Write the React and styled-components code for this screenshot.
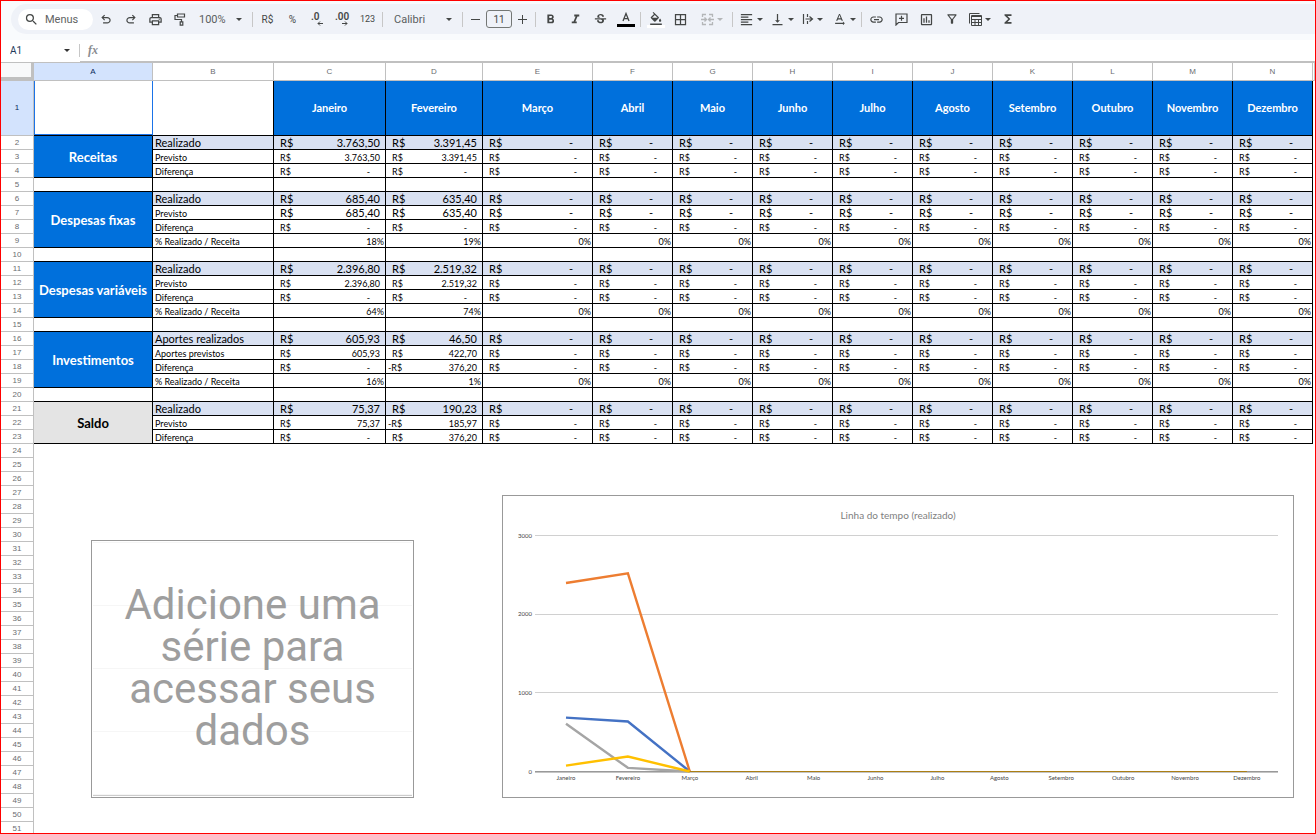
import React from "react";
import styled, { createGlobalStyle, css } from "styled-components";
import {
  MdOutlinePrint,
  MdFormatBold,
  MdFormatItalic,
  MdStrikethroughS,
  MdFormatColorFill,
  MdBorderAll,
  MdFormatAlignLeft,
  MdVerticalAlignBottom,
  MdTextRotationNone,
  MdLink,
  MdOutlineInsertChart,
  MdOutlineFilterAlt,
  MdFunctions,
  MdSearch,
} from "react-icons/md";

const ui = '"Roboto", "Liberation Sans", sans-serif';
const sheetFont = '"Lato", "Open Sans", sans-serif';

const Global = createGlobalStyle`
  *, *::before, *::after { box-sizing: border-box; }
  body { margin: 0; background: #fff; font-family: ${ui}; }
  button, input, select {
    margin: 0; padding: 0; border: 0; background: none; color: inherit; font: inherit;
  }
  button, select { cursor: pointer; }
`;

const Frame = styled.div`
  display: flex;
  flex-direction: column;
  height: 100vh;
  border: 1px solid #f00;
  overflow: hidden;
`;

/* ---------- toolbar ---------- */
const ToolbarArea = styled.header`
  flex: none;
  padding: 3px 0 6px 10px;
  background: #f9fbfd;
`;

const Toolbar = styled.div`
  display: flex;
  align-items: center;
  height: 30px;
  padding-left: 7px;
  border-radius: 15px 0 0 15px;
  background: #eff2f8;
  color: #444746;
  font-size: 11px;
  overflow: hidden;
`;

const MenuSearch = styled.label`
  display: flex;
  align-items: center;
  gap: 6px;
  flex: none;
  width: 75px;
  height: 21px;
  padding-left: 6px;
  border-radius: 11px;
  background: #fff;
  input {
    width: 48px;
    outline: none;
    &::placeholder { color: #5f6363; opacity: 1; }
  }
`;

const Tool = styled.button`
  display: flex;
  flex: none;
  flex-direction: ${(p) => (p.$swatch ? "column" : "row")};
  align-items: center;
  justify-content: center;
  gap: ${(p) => (p.$swatch ? 0 : 3)}px;
  width: ${(p) => p.$w || 25}px;
  height: 30px;
  font-size: ${(p) => p.$size || 10}px;
  color: ${(p) => (p.$muted ? "#b4b6b8" : "#444746")};
  svg { flex: none; }
`;

const Swatch = styled.span`
  width: 18px;
  height: 3px;
  background: ${(p) => p.$color};
`;

const Separator = styled.span`
  flex: none;
  width: 1px;
  height: 15px;
  margin: 0 2px;
  background: #c7c7c7;
`;

const Picker = styled.label`
  display: flex;
  align-items: center;
  flex: none;
  width: ${(p) => p.$w}px;
  padding: 0 8px 0 ${(p) => p.$left}px;
  select {
    flex: 1;
    min-width: 0;
    appearance: none;
    outline: none;
    color: #5a5e5e;
  }
  svg { flex: none; pointer-events: none; }
`;

const SizeInput = styled.input`
  flex: none;
  width: 26px;
  height: 18px;
  && { border: 1px solid #747775; }
  border-radius: 3px;
  text-align: center;
  font-size: 10px;
`;

const Caret = () => (
  <svg width="6" height="3" viewBox="0 0 6 3" aria-hidden="true">
    <path d="M0 0h6L3 3z" fill="currentColor" />
  </svg>
);

const Symbol = ({ d, size = 14 }) => (
  <svg width={size} height={size} viewBox="0 -980 960 960" fill="currentColor" aria-hidden="true">
    <path d={d} />
  </svg>
);

const undoPath =
  "M280-200v-80h284q63 0 109.5-40T720-420q0-60-46.5-100T564-560H312l104 104-56 56-200-200 200-200 56 56-104 104h252q97 0 169.5 63T800-420q0 94-72.5 157T564-200H280Z";
const redoPath =
  "M396-200q-97 0-169.5-63T160-420q0-94 72.5-157T396-640h252L544-744l56-56 200 200-200 200-56-56 104-104H396q-63 0-109.5 40T240-420q0 60 46.5 100T396-280h284v80H396Z";

const Decimals = ({ label, right }) => (
  <svg width="16" height="14" viewBox="0 0 16 14" aria-hidden="true">
    <text x={right ? 0 : 1} y="8" fontSize="10" fontWeight="600" fill="currentColor">{label}</text>
    {right ? (
      <path d="M7 11.5h5M10 9.5l2 2-2 2" fill="none" stroke="currentColor" />
    ) : (
      <path d="M13 11.5H8M10 9.5l-2 2 2 2" fill="none" stroke="currentColor" />
    )}
  </svg>
);

const RollerIcon = () => (
  <svg width="13" height="13" viewBox="0 0 13 13" fill="none" stroke="currentColor" strokeWidth="1.2" aria-hidden="true">
    <path d="M3.500 1h7v3h-7zM3.500 2.500H1v4h6.500V8.500M6.200 8.800h2.600v3.400H6.200z" />
  </svg>
);

const MergeIcon = () => (
  <svg width="13" height="13" viewBox="0 0 13 13" fill="none" stroke="currentColor" strokeWidth="1.3" aria-hidden="true">
    <path d="M5 1.5H1.5V4M8 1.5h3.5V4M5 11.5H1.5V9M8 11.5h3.5V9M0 6.5h5M3.5 4.5l2 2-2 2M13 6.5H8M9.500 4.500l-2 2 2 2" />
  </svg>
);

const OverflowIcon = () => (
  <svg width="12" height="12" viewBox="0 0 12 12" fill="none" stroke="currentColor" aria-hidden="true">
    <path d="M1.500 1v10M5.500 1v3M5.500 8v3M3.500 6H10M7.500 3.500L10.500 6l-3 2.500" strokeWidth="1.2" />
  </svg>
);

const CommentIcon = () => (
  <svg width="13" height="13" viewBox="0 0 13 13" fill="none" stroke="currentColor" strokeWidth="1.2" aria-hidden="true">
    <path d="M1 12V1h11v8.500H3.500zM6.500 2.800v5M4 5.300h5" />
  </svg>
);

const TableViewIcon = () => (
  <svg width="13" height="13" viewBox="0 0 13 13" fill="none" stroke="currentColor" aria-hidden="true">
    <path d="M.5 10.500V.5h10M2.500 12.500v-10h10v10zM2.500 6.500h10M2.500 9.500h10M6 6.500v6M9.500 6.500v6M2.500 3.500h10" />
  </svg>
);

const LetterA = () => (
  <svg width="12" height="12" viewBox="0 0 12 12" aria-hidden="true">
    <path d="M3 9L6 1.500 9 9M4 6.700h4" fill="none" stroke="currentColor" strokeWidth="1.300" />
  </svg>
);

/* ---------- formula bar ---------- */
const FormulaBar = styled.div`
  display: flex;
  flex: none;
  height: 22px;
  color: #333;
  font-size: 10px;
`;

const NameBox = styled.label`
  display: flex;
  align-items: center;
  width: 79px;
  padding: 0 10px 2px 9px;
  input { width: 54px; outline: none; font-size: 10px; color: #1f3a5a; }
`;

const FormulaField = styled.label`
  display: flex;
  align-items: center;
  flex: 1;
  border-bottom: 1px solid #c0c0c0;
  &::before {
    content: "";
    width: 1px;
    height: 13px;
    margin-right: 8px;
    margin-left: -1px;
    background: #c7c7c7;
  }
  em {
    font: italic bold 12px "Liberation Serif", serif;
    color: #8a8d91;
  }
  input { flex: 1; outline: none; padding-left: 12px; }
`;

/* ---------- sheet ---------- */
const SheetArea = styled.main`
  flex: 1;
  min-height: 0;
  border-top: 1px solid #c0c0c0;
  overflow: hidden;
`;

const Sheet = styled.table`
  width: 100%;
  table-layout: fixed;
  border-collapse: separate;
  border-spacing: 0;
  font-family: ${sheetFont};
  color: #000;
  td, th { padding: 0; }
`;

const headLook = css`
  border-right: 1px solid #c0c0c0;
  border-bottom: 1px solid #c0c0c0;
  background: ${(p) => (p.$on ? "#d3e3fd" : "#fff")};
  color: ${(p) => (p.$on ? "#0b2a5c" : "#6a6d70")};
  font: 400 8px/12px "Liberation Sans", Arial, sans-serif;
  text-align: center;
`;

const ColumnHead = styled.th`
  ${headLook}
  height: 18px;
`;

const Corner = styled.th`
  height: 18px;
  border-right: 3px solid #c0c0c0;
  border-bottom: 4px solid #c0c0c0;
  background: #f8f9fa;
`;

const RowHead = styled.th`
  ${headLook}
  height: ${(p) => (p.$on ? 55 : 14)}px;
`;

const Cell = styled.td`
  height: 14px;
  border-right: 1px solid #000;
  border-bottom: 1px solid #000;
  background: ${(p) => (p.$tint ? "#d9e1f2" : "#fff")};
  font-size: ${(p) => (p.$big ? 11 : 9)}px;
  line-height: ${(p) => (p.$big ? 13 : 11)}px;
  vertical-align: bottom;
  white-space: nowrap;
`;

const LabelCell = styled(Cell)`
  && { padding-left: 2px; }
`;

const PercentCell = styled(Cell)`
  && { padding-right: 1px; }
  text-align: right;
`;

const Money = styled.div`
  display: flex;
  justify-content: space-between;
  padding-right: ${(p) => (p.$dash ? (p.$big ? 19 : 15) : 5)}px;
  padding-left: ${(p) => (p.$negative ? 2 : 6)}px;
`;

const MonthCell = styled.th`
  border-right: 1px solid #000;
  border-bottom: 1px solid #000;
  background: #0070dc;
  color: #fff;
  font-size: 11px;
  line-height: 14px;
  font-weight: 700;
`;

const GroupCell = styled.th`
  border-right: 1px solid #000;
  border-bottom: 1px solid #000;
  background: ${(p) => (p.$grey ? "#e4e4e4" : "#0070dc")};
  color: ${(p) => (p.$grey ? "#000" : "#fff")};
  font-size: 13px;
  line-height: 16px;
  font-weight: 700;
  white-space: nowrap;
`;

const SelectedCell = styled.td`
  border-right: 1px solid #1a73e8;
  border-bottom: 1px solid #000;
  box-shadow: inset 1px -1px 0 #1a73e8;
`;

const CanvasCell = styled.td`
  vertical-align: top;
`;

const Charts = styled.div`
  display: flex;
  align-items: flex-end;
  gap: 88px;
  padding: 51px 21px 0 57px;
`;

const EmptyChart = styled.section`
  display: flex;
  align-items: center;
  flex: none;
  width: 323px;
  height: 258px;
  padding: 0 24px 3px;
  border: 1px solid #999;
  background: repeating-linear-gradient(#f6f6f6 0 1px, transparent 1px 63px) 1px 1px / 319px 253px no-repeat,
    linear-gradient(#ccc, #ccc) 1px 254px / 319px 1px no-repeat, #fff;
  p {
    margin: 0;
    width: 100%;
    font: 400 42px/42px ${ui};
    color: #9e9e9e;
    text-align: center;
  }
`;

const LineChart = styled.figure`
  flex: 1;
  min-width: 0;
  height: 303px;
  margin: 0;
  border: 1px solid #999;
  background: #fff;
  svg { display: block; width: 100%; height: 100%; font-family: ${sheetFont}; }
`;

/* ---------- data ---------- */
const months = ["Janeiro", "Fevereiro", "Março", "Abril", "Maio", "Junho", "Julho", "Agosto", "Setembro", "Outubro", "Novembro", "Dezembro"];
const letters = "ABCDEFGHIJKLMN".split("");
const widths = [119, 121, 112, 97, 110, 80, 80, 80, 80, 80, 80, 80, 80, 80];

const groups = [
  {
    name: "Receitas",
    rows: [
      { label: "Realizado", values: ["3.763,50", "3.391,45"], big: true, tint: true },
      { label: "Previsto", values: ["3.763,50", "3.391,45"] },
      { label: "Diferença", values: ["-", "-"] },
    ],
  },
  {
    name: "Despesas fixas",
    rows: [
      { label: "Realizado", values: ["685,40", "635,40"], big: true, tint: true },
      { label: "Previsto", values: ["685,40", "635,40"], bigValues: true },
      { label: "Diferença", values: ["-", "-"] },
      { label: "% Realizado / Receita", values: ["18%", "19%"], percent: true },
    ],
  },
  {
    name: "Despesas variáveis",
    rows: [
      { label: "Realizado", values: ["2.396,80", "2.519,32"], big: true, tint: true },
      { label: "Previsto", values: ["2.396,80", "2.519,32"] },
      { label: "Diferença", values: ["-", "-"] },
      { label: "% Realizado / Receita", values: ["64%", "74%"], percent: true },
    ],
  },
  {
    name: "Investimentos",
    rows: [
      { label: "Aportes realizados", values: ["605,93", "46,50"], big: true, tint: true },
      { label: "Aportes previstos", values: ["605,93", "422,70"] },
      { label: "Diferença", values: ["-", "376,20"], negative: 1 },
      { label: "% Realizado / Receita", values: ["16%", "1%"], percent: true },
    ],
  },
  {
    name: "Saldo",
    grey: true,
    rows: [
      { label: "Realizado", values: ["75,37", "190,23"], big: true, tint: true },
      { label: "Previsto", values: ["75,37", "185,97"], negative: 1 },
      { label: "Diferença", values: ["-", "376,20"] },
    ],
  },
];

const series = [
  { color: "#a5a5a5", values: [605.93, 46.5, 0] },
  { color: "#4472c4", values: [685.4, 635.4, 0] },
  { color: "#ed7d31", values: [2396.8, 2519.32, 0] },
  { color: "#ffc000", values: [75.37, 190.23, 0] },
];

function ValueCell({ row, index }) {
  const big = row.big || row.bigValues;
  const value = row.values[index] ?? (row.percent ? "0%" : "-");
  if (row.percent) return <PercentCell>{value}</PercentCell>;
  const negative = row.negative === index;
  return (
    <Cell $big={big} $tint={row.tint}>
      <Money $big={big} $dash={value === "-"} $negative={negative}>
        <span>{negative ? "-R$" : "R$"}</span>
        <span>{value}</span>
      </Money>
    </Cell>
  );
}

function bodyRows() {
  const out = [];
  let n = 2;
  groups.forEach((group, g) => {
    group.rows.forEach((row, i) => {
      out.push(
        <tr key={n}>
          <RowHead scope="row">{n}</RowHead>
          {i === 0 && (
            <GroupCell rowSpan={group.rows.length} $grey={group.grey}>{group.name}</GroupCell>
          )}
          <LabelCell $big={row.big} $tint={row.tint}>{row.label}</LabelCell>
          {months.map((m, k) => <ValueCell key={m} row={row} index={k} />)}
        </tr>
      );
      n += 1;
    });
    if (g < groups.length - 1) {
      out.push(
        <tr key={n}>
          <RowHead scope="row">{n}</RowHead>
          {letters.map((l) => <Cell key={l} />)}
        </tr>
      );
      n += 1;
    }
  });
  return out;
}

function Timeline() {
  const x = (i) => 63 + i * 61.9;
  const y = (v) => 275.5 - (v * 236) / 3000;
  return (
    <LineChart>
      <svg viewBox="0 0 790 301" role="img" aria-label="Linha do tempo (realizado)">
        <text x="395" y="23" fontSize="10" fill="#808080" textAnchor="middle">Linha do tempo (realizado)</text>
        {[3000, 2000, 1000, 0].map((v) => (
          <g key={v}>
            <path d={`M32 ${Math.floor(y(v)) + 0.5}H775`} stroke={v ? "#d0d0d0" : "#999"} />
            <text x="29" y={y(v) + 2} fontSize="6" fill="#444" textAnchor="end">{v}</text>
          </g>
        ))}
        <path d="M32 276.500H775" stroke="#c4c4c4" />
        {series.map((s) => (
          <polyline
            key={s.color}
            points={s.values.map((v, i) => `${x(i)},${y(v)}`).join(" ")}
            fill="none"
            stroke={s.color}
            strokeWidth="2.4"
          />
        ))}
        <path d={`M${x(2)} 275.500H${x(11)}`} stroke="#ab7f14" />
        {months.map((m, i) => (
          <text key={m} x={x(i)} y="284" fontSize="6" fill="#444" textAnchor="middle">{m}</text>
        ))}
      </svg>
    </LineChart>
  );
}

export default function App() {
  return (
    <Frame>
      <Global />
      <ToolbarArea>
        <Toolbar role="toolbar">
          <MenuSearch>
            <MdSearch size={15} />
            <input placeholder="Menus" aria-label="Menus" />
          </MenuSearch>
          <Tool aria-label="Desfazer"><Symbol d={undoPath} /></Tool>
          <Tool aria-label="Refazer"><Symbol d={redoPath} /></Tool>
          <Tool aria-label="Imprimir"><MdOutlinePrint size={15} /></Tool>
          <Tool aria-label="Pintar formatação"><RollerIcon /></Tool>
          <Picker $w={57} $left={6}>
            <select aria-label="Zoom" defaultValue="100%"><option>100%</option></select>
            <Caret />
          </Picker>
          <Separator />
          <Tool>R$</Tool>
          <Tool>%</Tool>
          <Tool aria-label="Diminuir casas decimais"><Decimals label=".0" /></Tool>
          <Tool aria-label="Aumentar casas decimais"><Decimals label=".00" right /></Tool>
          <Tool $size={9}>123</Tool>
          <Separator />
          <Picker $w={75} $left={9}>
            <select aria-label="Fonte" defaultValue="Calibri"><option>Calibri</option></select>
            <Caret />
          </Picker>
          <Separator />
          <Tool $w={21} aria-label="Diminuir fonte">
            <svg width="9" height="9"><path d="M0 4.500h9" stroke="currentColor" strokeWidth="1" /></svg>
          </Tool>
          <SizeInput defaultValue="11" aria-label="Tamanho da fonte" />
          <Tool $w={21} aria-label="Aumentar fonte">
            <svg width="9" height="9"><path d="M0 4.500h9M4.500 0v9" stroke="currentColor" strokeWidth="1" /></svg>
          </Tool>
          <Separator />
          <Tool aria-label="Negrito"><MdFormatBold size={15} /></Tool>
          <Tool aria-label="Itálico"><MdFormatItalic size={15} /></Tool>
          <Tool aria-label="Tachado"><MdStrikethroughS size={15} /></Tool>
          <Tool aria-label="Cor do texto" $swatch><LetterA /><Swatch $color="#000" /></Tool>
          <Separator />
          <Tool aria-label="Cor de preenchimento" $swatch><MdFormatColorFill size={14} viewBox="0 0 24 21" /><Swatch $color="#fff" /></Tool>
          <Tool aria-label="Bordas"><MdBorderAll size={15} /></Tool>
          <Tool $w={37} $muted aria-label="Mesclar células"><MergeIcon /><Caret /></Tool>
          <Separator />
          <Tool $w={31} aria-label="Alinhamento horizontal"><MdFormatAlignLeft size={15} /><Caret /></Tool>
          <Tool $w={31} aria-label="Alinhamento vertical"><MdVerticalAlignBottom size={15} /><Caret /></Tool>
          <Tool $w={31} aria-label="Ajuste de texto"><OverflowIcon /><Caret /></Tool>
          <Tool $w={31} aria-label="Rotação do texto"><MdTextRotationNone size={15} /><Caret /></Tool>
          <Separator />
          <Tool aria-label="Inserir link"><MdLink size={15} /></Tool>
          <Tool aria-label="Inserir comentário"><CommentIcon /></Tool>
          <Tool aria-label="Inserir gráfico"><MdOutlineInsertChart size={15} /></Tool>
          <Tool aria-label="Criar filtro"><MdOutlineFilterAlt size={14} /></Tool>
          <Tool $w={31} aria-label="Visualizações"><TableViewIcon /><Caret /></Tool>
          <Tool aria-label="Funções"><MdFunctions size={14} /></Tool>
        </Toolbar>
      </ToolbarArea>
      <FormulaBar>
        <NameBox>
          <input defaultValue="A1" aria-label="Caixa de nome" />
          <Caret />
        </NameBox>
        <FormulaField>
          <em>fx</em>
          <input aria-label="Fórmula" />
        </FormulaField>
      </FormulaBar>
      <SheetArea>
        <Sheet>
          <colgroup>
            <col width="33" />
            {widths.map((w, i) => <col key={letters[i]} width={w} />)}
            <col />
          </colgroup>
          <thead>
            <tr>
              <Corner />
              {letters.map((l) => <ColumnHead key={l} scope="col" $on={l === "A"}>{l}</ColumnHead>)}
              <ColumnHead />
            </tr>
          </thead>
          <tbody>
            <tr>
              <RowHead scope="row" $on>1</RowHead>
              <SelectedCell />
              <Cell />
              {months.map((m) => <MonthCell key={m}>{m}</MonthCell>)}
            </tr>
            {bodyRows()}
            {Array.from({ length: 28 }, (_, i) => (
              <tr key={i}>
                <RowHead scope="row">{24 + i}</RowHead>
                {i === 0 && (
                  <CanvasCell rowSpan={28} colSpan={15}>
                    <Charts>
                      <EmptyChart><p>Adicione uma série para acessar seus dados</p></EmptyChart>
                      <Timeline />
                    </Charts>
                  </CanvasCell>
                )}
              </tr>
            ))}
          </tbody>
        </Sheet>
      </SheetArea>
    </Frame>
  );
}
